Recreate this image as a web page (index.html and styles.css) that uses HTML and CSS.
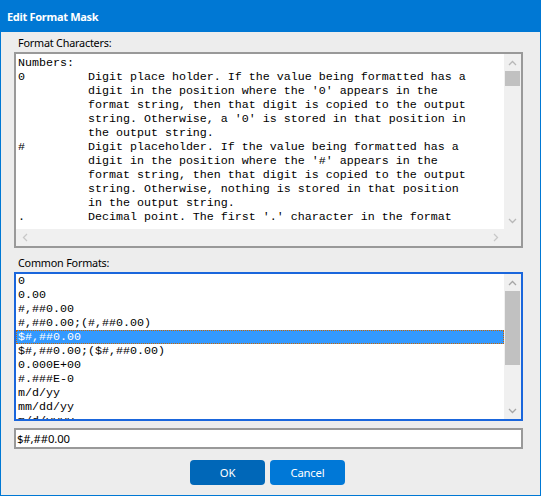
FILE: index.html
```html
<!DOCTYPE html>
<html>
<head>
<meta charset="utf-8">
<link rel="stylesheet" href="styles.css">
</head>
<body>
<div class="window">
  <div class="titlebar">Edit Format Mask</div>
  <div class="content">
    <div class="label">Format Characters:</div>
    <div class="memo">
<pre class="memo-text">Numbers:
0         Digit place holder. If the value being formatted has a
          digit in the position where the '0' appears in the
          format string, then that digit is copied to the output
          string. Otherwise, a '0' is stored in that position in
          the output string.
#         Digit placeholder. If the value being formatted has a
          digit in the position where the '#' appears in the
          format string, then that digit is copied to the output
          string. Otherwise, nothing is stored in that position
          in the output string.
.         Decimal point. The first '.' character in the format</pre>
      <div class="vscroll">
        <div class="sb-btn"><svg width="9" height="6" viewBox="0 0 9 6"><polyline points="1,5 4.5,1.5 8,5" class="chev light"/></svg></div>
        <div class="sb-track"><div class="thumb thumb-small"></div></div>
        <div class="sb-btn"><svg width="9" height="6" viewBox="0 0 9 6"><polyline points="1,1 4.5,4.5 8,1" class="chev light"/></svg></div>
      </div>
      <div class="hscroll">
        <div class="sb-btn"><svg width="6" height="9" viewBox="0 0 6 9"><polyline points="5,1 1.5,4.5 5,8" class="chev lighter"/></svg></div>
        <div class="sb-btn"><svg width="6" height="9" viewBox="0 0 6 9"><polyline points="1,1 4.5,4.5 1,8" class="chev lighter"/></svg></div>
      </div>
      <div class="corner"></div>
    </div>

    <div class="label label-2">Common Formats:</div>
    <div class="listbox">
      <ul class="list">
        <li>0</li>
        <li>0.00</li>
        <li>#,##0.00</li>
        <li>#,##0.00;(#,##0.00)</li>
        <li class="selected">$#,##0.00</li>
        <li>$#,##0.00;($#,##0.00)</li>
        <li>0.000E+00</li>
        <li>#.###E-0</li>
        <li>m/d/yy</li>
        <li>mm/dd/yy</li>
        <li>m/d/yyyy</li>
      </ul>
      <div class="vscroll">
        <div class="sb-btn"><svg width="9" height="6" viewBox="0 0 9 6"><polyline points="1,5 4.5,1.5 8,5" class="chev"/></svg></div>
        <div class="sb-track"><div class="thumb thumb-big"></div></div>
        <div class="sb-btn"><svg width="9" height="6" viewBox="0 0 9 6"><polyline points="1,1 4.5,4.5 8,1" class="chev"/></svg></div>
      </div>
    </div>

    <div class="input">$#,##0.00</div>

    <div class="buttons">
      <div class="btn btn-ok">OK</div>
      <div class="btn btn-cancel">Cancel</div>
    </div>
  </div>
</div>
</body>
</html>
```

FILE: styles.css
```css
* { box-sizing: border-box; }
html, body { margin: 0; padding: 0; }
body { width: 541px; height: 496px; overflow: hidden; background: #ededed; }

.window {
  width: 541px;
  height: 496px;
  border: 1px solid #0078d4;
  border-top: none;
  background: #ededed;
  font-family: "Noto Sans", "Liberation Sans", sans-serif;
  font-size: 10.8px;
  letter-spacing: -0.2px;
  color: #000;
}

.titlebar {
  height: 32px;
  line-height: 33px;
  background: #0078d4;
  color: #fff;
  font-weight: bold;
  font-size: 11px;
  letter-spacing: -0.3px;
  padding-left: 6px;
}

.content {
  padding: 3px 17px 0 13px;
}

.label {
  height: 16px;
  line-height: 16px;
  padding-left: 4px;
  margin-bottom: 1px;
}
.label-2 { margin-top: 7px; }

.memo {
  height: 196px;
  border: 2px solid #999;
  background: #fff;
  display: grid;
  grid-template-columns: 1fr 17px;
  grid-template-rows: 1fr 17px;
}

.memo-text {
  margin: 0;
  padding: 2px 0 0 2px;
  font-family: "Liberation Mono", "Courier New", monospace;
  font-size: 11.67px;
  letter-spacing: 0;
  line-height: 14px;
  overflow: hidden;
  white-space: pre;
  color: #000;
}

.vscroll {
  background: #f0f0f0;
  display: flex;
  flex-direction: column;
}
.sb-btn {
  width: 17px;
  height: 17px;
  flex: none;
  display: flex;
  align-items: center;
  justify-content: center;
}
.sb-track { flex: 1; }
.thumb { margin: 0 1px; background: #c1c1c1; }
.thumb-small { height: 15px; }
.thumb-big { height: 74px; }

.hscroll {
  background: #f0f0f0;
  display: flex;
  justify-content: space-between;
}
.corner { background: #f0f0f0; }

.chev { fill: none; stroke: #a6a6a6; stroke-width: 1.3; }
.chev.light { stroke: #b8b8b8; }
.chev.lighter { stroke: #c8c8c8; }

.listbox {
  height: 149px;
  border: 2px solid #1a66dc;
  background: #fff;
  display: grid;
  grid-template-columns: 1fr 17px;
  overflow: hidden;
}
.list {
  list-style: none;
  margin: 0;
  padding: 0;
  overflow: hidden;
  font-family: "Liberation Mono", "Courier New", monospace;
  font-size: 11.67px;
  letter-spacing: 0;
}
.list li {
  height: 14px;
  line-height: 14px;
  padding-left: 2px;
  white-space: pre;
}
.list li.selected {
  background: #3399ff;
  color: #fff;
  outline: 1px dotted #cc6600;
  outline-offset: -1px;
}

.input {
  margin-top: 7px;
  height: 21px;
  border: 2px solid #999;
  background: #fff;
  line-height: 17px;
  padding-left: 1px;
  font-size: 11.3px;
  letter-spacing: -0.1px;
}

.buttons {
  margin-top: 11px;
  display: flex;
  justify-content: center;
  gap: 5px;
  padding-right: 2px;
}
.btn {
  width: 75px;
  height: 25px;
  border-radius: 4px;
  color: #fff;
  text-align: center;
  line-height: 25px;
  font-size: 11.3px;
}
.btn-ok { background: #0067b8; }
.btn-cancel { background: #0078d7; }
```
